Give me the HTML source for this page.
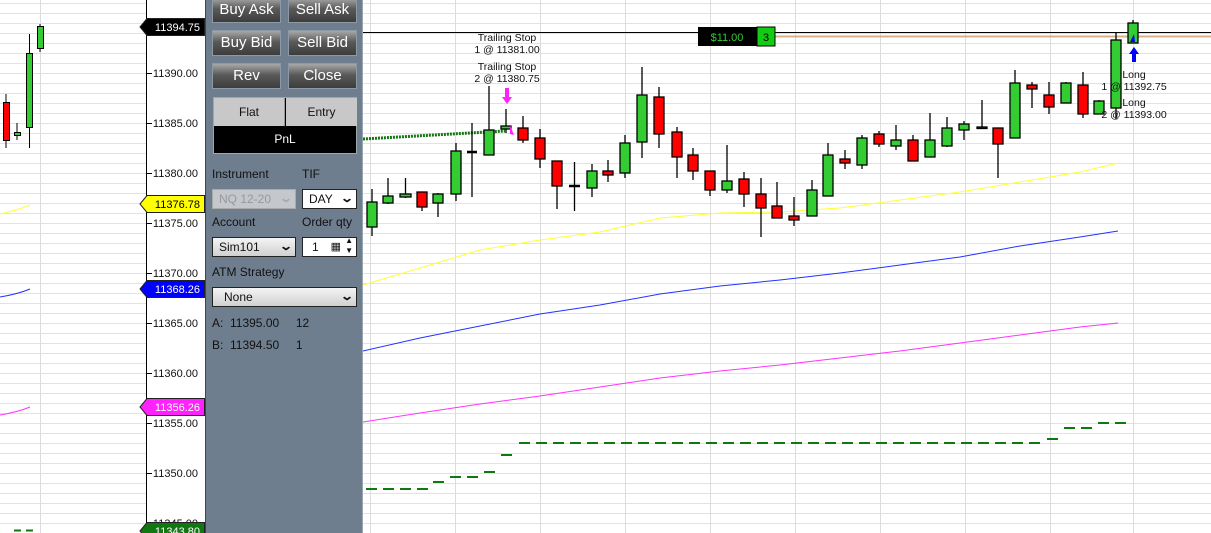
<!DOCTYPE html>
<html><head><meta charset="utf-8">
<style>
*{margin:0;padding:0;box-sizing:border-box}
html,body{width:1211px;height:533px;overflow:hidden}
body{position:relative;background:#fff;font-family:"Liberation Sans",Arial,sans-serif;font-size:12px}
.grid{position:absolute;top:0;height:533px;background:
repeating-linear-gradient(to bottom,transparent 0,transparent 3px,#e2e2e2 3px,#e2e2e2 4px,transparent 4px,transparent 10px)}
#panel{position:absolute;left:205px;top:0;width:158px;height:533px;background:#6f7e8f;border-left:1px solid #444;border-right:1px solid #9aa6b2}
.btn{position:absolute;width:69px;height:26px;background:linear-gradient(#a8a8a8,#5a5a5a 45%,#3c3c3c);border:1px solid #8d99a5;color:#fff;font-size:15px;text-align:center;line-height:24px}
.lbl{position:absolute;color:#111;font-size:12px}
.sel{position:absolute;height:20px;background:linear-gradient(#f4f4f4,#d0d0d0);border:1px solid #222;font-size:12px;line-height:18px;padding-left:6px;color:#111}
.sel .v{position:absolute;right:4px;top:-1px;font-size:12px;font-weight:bold;transform:scaleX(1.4)}
</style></head><body>
<div class="grid" style="left:0;width:147px"></div>
<div class="grid" style="left:363px;width:848px"></div>

<svg style="position:absolute;left:0;top:0" width="1211" height="533">
<g stroke="#dcdcdc" stroke-width="1">
<line x1="40.5" y1="0" x2="40.5" y2="533"/>
<line x1="370.5" y1="0" x2="370.5" y2="533"/><line x1="455.5" y1="0" x2="455.5" y2="533"/><line x1="540.5" y1="0" x2="540.5" y2="533"/><line x1="625.5" y1="0" x2="625.5" y2="533"/><line x1="710.5" y1="0" x2="710.5" y2="533"/><line x1="795.5" y1="0" x2="795.5" y2="533"/><line x1="880.5" y1="0" x2="880.5" y2="533"/><line x1="965.5" y1="0" x2="965.5" y2="533"/><line x1="1050.5" y1="0" x2="1050.5" y2="533"/><line x1="1133.5" y1="0" x2="1133.5" y2="533"/>
</g>
<path d="M0 214 Q18 210 30 205" stroke="#ffff33" fill="none"/>
<path d="M0 297 Q18 294 30 289" stroke="#2233ff" fill="none"/>
<path d="M0 415 Q18 412 30 407" stroke="#ff33ff" fill="none"/>
<line x1="14" y1="530.5" x2="35" y2="530.5" stroke="#117711" stroke-width="2" stroke-dasharray="7,5"/>
<path d="M363 285 L420 268 L480 250 L540 240 L600 232 L660 218 L720 213 L780 212 L840 208 L900 200 L960 192 L1020 182 L1080 172 L1118 163" stroke="#ffff33" fill="none"/>
<path d="M363 351 L420 338 L480 326 L540 314 L600 305 L660 294 L720 286 L780 280 L840 273 L900 265 L960 257 L1020 246 L1080 237 L1118 231" stroke="#2233ff" fill="none"/>
<path d="M363 422 L420 413 L480 404 L540 396 L600 387 L660 378 L720 371 L780 365 L840 358 L900 351 L960 343 L1020 335 L1080 327 L1118 323" stroke="#ff33ff" fill="none"/>
<line x1="363" y1="139" x2="505" y2="131" stroke="#117711" stroke-width="3" stroke-dasharray="2,1"/>
<g stroke="#117711" stroke-width="2">
<line x1="366" y1="489" x2="428" y2="489" stroke-dasharray="11,6"/>
<line x1="433" y1="482" x2="444" y2="482"/>
<line x1="450" y1="477" x2="478" y2="477" stroke-dasharray="11,6"/>
<line x1="484" y1="472" x2="495" y2="472"/>
<line x1="501" y1="455" x2="512" y2="455"/>
<line x1="519" y1="443" x2="1041" y2="443" stroke-dasharray="11,6"/>
<line x1="1047" y1="439" x2="1058" y2="439"/>
<line x1="1064" y1="428" x2="1092" y2="428" stroke-dasharray="11,6"/>
<line x1="1098" y1="423" x2="1126" y2="423" stroke-dasharray="11,6"/>
</g>
<line x1="363" y1="32.5" x2="1211" y2="32.5" stroke="#000"/>
<line x1="775" y1="36.5" x2="1211" y2="36.5" stroke="#d8b08a" stroke-width="2"/>
<g stroke="#000" stroke-width="1">
<g fill="#ff0000"><line x1="6" y1="94" x2="6" y2="148"/><rect x="3.5" y="102.5" width="6" height="38"/></g>
<g fill="#33cc33">
<line x1="17" y1="123" x2="17" y2="140"/><rect x="14.5" y="132.5" width="6" height="3"/>
<line x1="29.5" y1="34" x2="29.5" y2="148"/><rect x="26.5" y="53.5" width="6" height="74"/>
<line x1="40" y1="24" x2="40" y2="52"/><rect x="37.5" y="26.5" width="6" height="22"/>
</g></g>
<g stroke="#000" stroke-width="1.3">
<line x1="372" y1="189" x2="372" y2="236"/><line x1="388" y1="178" x2="388" y2="204"/><line x1="405.5" y1="178" x2="405.5" y2="198"/><line x1="422" y1="192" x2="422" y2="211"/><line x1="438" y1="193" x2="438" y2="217"/><line x1="456" y1="143" x2="456" y2="201"/><line x1="472" y1="123" x2="472" y2="197"/><line x1="489" y1="86" x2="489" y2="155"/><line x1="506" y1="109" x2="506" y2="133"/><line x1="523" y1="116" x2="523" y2="143"/><line x1="540" y1="129" x2="540" y2="168"/><line x1="557" y1="161" x2="557" y2="209"/><line x1="574.5" y1="162" x2="574.5" y2="211"/><line x1="592" y1="164" x2="592" y2="197"/><line x1="608" y1="160" x2="608" y2="182"/><line x1="625" y1="135" x2="625" y2="178"/><line x1="642" y1="67" x2="642" y2="158"/><line x1="659" y1="87" x2="659" y2="148"/><line x1="677" y1="127" x2="677" y2="178"/><line x1="693" y1="148" x2="693" y2="180"/><line x1="710" y1="171" x2="710" y2="196"/><line x1="727" y1="145" x2="727" y2="193"/><line x1="744" y1="172" x2="744" y2="207"/><line x1="761" y1="178" x2="761" y2="237"/><line x1="777" y1="182" x2="777" y2="218"/><line x1="794" y1="197" x2="794" y2="226"/><line x1="812" y1="180" x2="812" y2="216"/><line x1="828" y1="143" x2="828" y2="196"/><line x1="845" y1="150" x2="845" y2="169"/><line x1="862" y1="135" x2="862" y2="169"/><line x1="879" y1="131" x2="879" y2="147"/><line x1="896" y1="125" x2="896" y2="150"/><line x1="913" y1="135" x2="913" y2="161"/><line x1="930" y1="113" x2="930" y2="157"/><line x1="947" y1="117" x2="947" y2="147"/><line x1="964" y1="121" x2="964" y2="140"/><line x1="982" y1="100" x2="982" y2="128"/><line x1="998" y1="128" x2="998" y2="178"/><line x1="1015" y1="70" x2="1015" y2="138"/><line x1="1032" y1="82" x2="1032" y2="108"/><line x1="1049" y1="82" x2="1049" y2="114"/><line x1="1066" y1="82" x2="1066" y2="103"/><line x1="1083" y1="72" x2="1083" y2="118"/><line x1="1099" y1="100" x2="1099" y2="114"/><line x1="1116" y1="32" x2="1116" y2="119"/><line x1="1133" y1="20" x2="1133" y2="43"/>
</g>
<g stroke="#000" stroke-width="1.3" fill="#33cc33">
<rect x="367" y="202" width="10" height="25"/><rect x="383" y="196" width="10" height="7"/><rect x="400" y="194" width="11" height="3"/><rect x="433" y="194" width="10" height="9"/><rect x="451" y="151" width="10" height="43"/><rect x="484" y="130" width="10" height="25"/><rect x="501" y="126" width="10" height="3"/><rect x="587" y="171" width="10" height="17"/><rect x="620" y="143" width="10" height="30"/><rect x="637" y="95" width="10" height="47"/><rect x="722" y="181" width="10" height="9"/><rect x="807" y="190" width="10" height="26"/><rect x="823" y="155" width="10" height="41"/><rect x="857" y="138" width="10" height="27"/><rect x="891" y="140" width="10" height="6"/><rect x="925" y="140" width="10" height="17"/><rect x="942" y="128" width="10" height="18"/><rect x="959" y="124" width="10" height="6"/><rect x="1010" y="83" width="10" height="55"/><rect x="1061" y="83" width="10" height="20"/><rect x="1094" y="101" width="10" height="13"/><rect x="1111" y="40" width="10" height="68"/><rect x="1128" y="23" width="10" height="20"/>
</g>
<g stroke="#000" stroke-width="1.3" fill="#ff0000">
<rect x="417" y="192" width="10" height="15"/><rect x="518" y="128" width="10" height="12"/><rect x="535" y="138" width="10" height="21"/><rect x="552" y="161" width="10" height="25"/><rect x="603" y="171" width="10" height="4"/><rect x="654" y="97" width="10" height="37"/><rect x="672" y="132" width="10" height="25"/><rect x="688" y="155" width="10" height="16"/><rect x="705" y="171" width="10" height="19"/><rect x="739" y="179" width="10" height="15"/><rect x="756" y="194" width="10" height="14"/><rect x="772" y="206" width="10" height="12"/><rect x="789" y="216" width="10" height="4"/><rect x="840" y="159" width="10" height="4"/><rect x="874" y="134" width="10" height="10"/><rect x="908" y="140" width="10" height="21"/><rect x="977" y="127" width="10" height="1.5"/><rect x="993" y="128" width="10" height="16"/><rect x="1027" y="85" width="10" height="4"/><rect x="1044" y="95" width="10" height="12"/><rect x="1078" y="85" width="10" height="29"/>
</g>
<g stroke="#000" stroke-width="2.5">
<line x1="467" y1="152" x2="477" y2="152"/><line x1="569" y1="186" x2="580" y2="186"/>
</g>
<path d="M505 88 h4 v9 h3 l-5 7 l-5 -7 h3z" fill="#ff22ff"/>
<path d="M510 125 l4 10 l-4 -1z" fill="#ff22ff"/>
<path d="M1132 62 h4 v-8 h3 l-5 -7 l-5 7 h3z" fill="#0000ff"/>
<path d="M1130 42 l4 -8 l1 8z" fill="#0000ff"/>
<g font-family="Liberation Sans,Arial,sans-serif" font-size="10.5" fill="#111" text-anchor="middle">
<text x="507" y="41">Trailing Stop</text><text x="507" y="53">1 @ 11381.00</text>
<text x="507" y="70">Trailing Stop</text><text x="507" y="82">2 @ 11380.75</text>
<text x="1134" y="78">Long</text><text x="1134" y="90">1 @ 11392.75</text>
<text x="1134" y="106">Long</text><text x="1134" y="118">2 @ 11393.00</text>
</g>
<rect x="698" y="27" width="59" height="19" fill="#000"/>
<text x="727" y="41" font-family="Liberation Sans,Arial,sans-serif" font-size="11" fill="#33cc33" text-anchor="middle">$11.00</text>
<rect x="757" y="27" width="18" height="19" fill="#11cc11" stroke="#000"/>
<text x="766" y="41" font-family="Liberation Sans,Arial,sans-serif" font-size="11" fill="#000" text-anchor="middle">3</text>
<!-- axis -->
<rect x="147" y="0" width="58" height="533" fill="#fff"/>
<line x1="146.5" y1="0" x2="146.5" y2="533" stroke="#000"/>
<g stroke="#000"><line x1="147" y1="73.5" x2="152" y2="73.5"/><line x1="147" y1="123.5" x2="152" y2="123.5"/><line x1="147" y1="173.5" x2="152" y2="173.5"/><line x1="147" y1="223.5" x2="152" y2="223.5"/><line x1="147" y1="273.5" x2="152" y2="273.5"/><line x1="147" y1="323.5" x2="152" y2="323.5"/><line x1="147" y1="373.5" x2="152" y2="373.5"/><line x1="147" y1="423.5" x2="152" y2="423.5"/><line x1="147" y1="473.5" x2="152" y2="473.5"/><line x1="147" y1="523.5" x2="152" y2="523.5"/></g>
<g font-family="Liberation Sans,Arial,sans-serif" font-size="11" fill="#111" text-anchor="end">
<text x="198" y="77">11390.00</text><text x="198" y="127">11385.00</text><text x="198" y="177">11380.00</text><text x="198" y="227">11375.00</text><text x="198" y="277">11370.00</text><text x="198" y="327">11365.00</text><text x="198" y="377">11360.00</text><text x="198" y="427">11355.00</text><text x="198" y="477">11350.00</text><text x="198" y="527">11345.00</text>
</g>
<g stroke="#222" stroke-width="1">
<path d="M140 27 L147 18.5 H204.5 V35.5 H147 Z" fill="#000"/>
<path d="M140 204 L147 195.5 H204.5 V212.5 H147 Z" fill="#ffff00"/>
<path d="M140 289 L147 280.5 H204.5 V297.5 H147 Z" fill="#0000ff"/>
<path d="M140 407 L147 398.5 H204.5 V415.5 H147 Z" fill="#ff22ff"/>
<path d="M140 531 L147 522.5 H204.5 V539.5 H147 Z" fill="#117711"/>
</g>
<g font-family="Liberation Sans,Arial,sans-serif" font-size="11" text-anchor="end">
<text x="200" y="31" fill="#fff">11394.75</text>
<text x="200" y="208" fill="#000">11376.78</text>
<text x="200" y="293" fill="#fff">11368.26</text>
<text x="200" y="411" fill="#fff">11356.26</text>
<text x="200" y="535" fill="#fff">11343.80</text>
</g>
</svg>

<div id="panel">
<div class="btn" style="left:6px;top:-3px">Buy Ask</div>
<div class="btn" style="left:82px;top:-3px">Sell Ask</div>
<div class="btn" style="left:6px;top:30px">Buy Bid</div>
<div class="btn" style="left:82px;top:30px">Sell Bid</div>
<div class="btn" style="left:6px;top:63px">Rev</div>
<div class="btn" style="left:82px;top:63px">Close</div>
<div style="position:absolute;left:7px;top:97px;width:144px;height:57px;border:1px solid #9aa;background:#000">
<div style="position:absolute;left:0;top:0;width:71px;height:28px;background:#c8c8c8;border-right:1px solid #999;text-align:center;line-height:28px;color:#111">Flat</div>
<div style="position:absolute;left:72px;top:0;width:71px;height:28px;background:#c8c8c8;text-align:center;line-height:28px;color:#111">Entry</div>
<div style="position:absolute;left:0;top:28px;width:142px;height:27px;text-align:center;line-height:27px;color:#fff">PnL</div>
</div>
<div class="lbl" style="left:6px;top:167px">Instrument</div>
<div class="lbl" style="left:96px;top:167px">TIF</div>
<div class="sel" style="left:6px;top:189px;width:84px;background:#c4c8cc;border-color:#aaa;color:#999">NQ 12-20<span class="v" style="color:#aaa">&#8964;</span></div>
<div class="sel" style="left:96px;top:189px;width:55px;background:#fff">DAY<span class="v">&#8964;</span></div>
<div class="lbl" style="left:6px;top:215px">Account</div>
<div class="lbl" style="left:96px;top:215px">Order qty</div>
<div class="sel" style="left:6px;top:237px;width:84px">Sim101<span class="v">&#8964;</span></div>
<div class="sel" style="left:96px;top:237px;width:55px;background:#fff;padding-left:9px">1<span style="position:absolute;right:15px;top:0;font-size:11px">&#9638;</span><span style="position:absolute;right:3px;top:-2px;font-size:8px;line-height:10px">&#9650;<br>&#9660;</span></div>
<div class="lbl" style="left:6px;top:265px">ATM Strategy</div>
<div class="sel" style="left:6px;top:287px;width:145px;padding-left:11px">None<span class="v">&#8964;</span></div>
<div class="lbl" style="left:6px;top:316px">A:&nbsp; 11395.00&nbsp;&nbsp;&nbsp;&nbsp; 12</div>
<div class="lbl" style="left:6px;top:338px">B:&nbsp; 11394.50&nbsp;&nbsp;&nbsp;&nbsp; 1</div>
</div>
</body></html>
